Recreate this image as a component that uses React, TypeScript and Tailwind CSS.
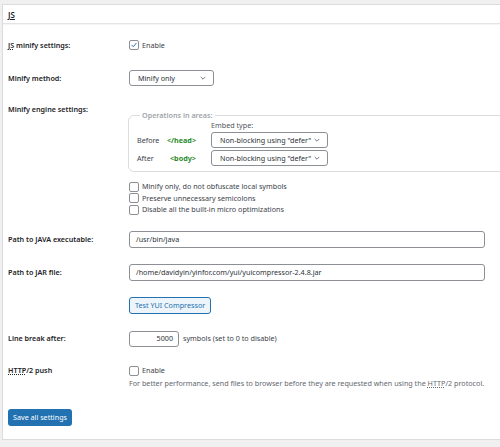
import React from "react";

const Chevron = () => (
  <svg width="8" height="8" viewBox="0 0 20 20" className="shrink-0">
    <path d="M5 8l5 5 5-5" fill="none" stroke="#50575e" strokeWidth="2" strokeLinecap="round" strokeLinejoin="round" />
  </svg>
);

function Select({ value, className }: { value: string; className: string }) {
  return (
    <div
      className={
        "flex items-center justify-between whitespace-nowrap rounded-[3px] border border-[#8c8f94] bg-white pl-[8px] pr-[6px] text-[#2c3338] " +
        className
      }
    >
      <span>{value}</span>
      <Chevron />
    </div>
  );
}

function Checkbox({ checked }: { checked?: boolean }) {
  return (
    <span className="flex h-[10px] w-[10px] shrink-0 items-center justify-center rounded-[2px] border border-[#8c8f94] bg-white">
      {checked && (
        <svg width="10" height="10" viewBox="0 0 20 20">
          <path d="M4.5 10.5l3.8 3.8L15.5 5.5" fill="none" stroke="#2271b1" strokeWidth="2.4" strokeLinecap="round" strokeLinejoin="round" />
        </svg>
      )}
    </span>
  );
}

function Row({ label, className, children }: { label: React.ReactNode; className: string; children: React.ReactNode }) {
  return (
    <div className={"flex " + className}>
      <div className="w-[121px] shrink-0 text-[7.2px] font-semibold text-[#1d2327]">{label}</div>
      <div className="flex-1">{children}</div>
    </div>
  );
}

export default function App() {
  return (
    <div
      className="h-[447px] w-[500px] overflow-hidden bg-[#f0f0f1] pl-[2px] pt-[4px] text-[7.2px] leading-[11px] text-[#3c434a]"
      style={{ fontFamily: '"Segoe UI", "Noto Sans", sans-serif' }}
    >
      <div className="h-[436px] w-[520px] border border-[#dcdcde] bg-white">
        {/* header */}
        <div className="flex h-[19px] items-center border-b border-[#e4e4e6] pl-[5px] shadow-[0_1px_1px_rgba(0,0,0,0.04)]">
          <span className="text-[8px] font-semibold text-[#1d2327] underline decoration-[#1d2327]">JS</span>
        </div>

        <div className="pl-[5px]">
          {/* JS minify settings */}
          <Row label={<><span className="underline decoration-dotted">JS</span> minify settings:</>} className="mt-[15px] h-[12px] items-center">
            <label className="flex items-center gap-[3px]">
              <Checkbox checked />
              <span>Enable</span>
            </label>
          </Row>

          {/* minify method */}
          <Row label="Minify method:" className="mt-[19px] h-[16px] items-center">
            <Select value="Minify only" className="h-[16px] w-[85px]" />
          </Row>

          {/* engine settings */}
          <Row label="Minify engine settings:" className="mt-[18px]">
            <fieldset className="ml-[-1px] mt-[6px] w-[400px] rounded-[6px] border border-[#dcdcde] pb-[5px] pl-[8px]">
              <legend className="ml-[3px] px-[2px] font-semibold text-[#a0a5aa]">Operations in areas:</legend>
              <div className="ml-[74px] mt-[-1px] h-[12px] text-[#50575e]">Embed type:</div>
              <div className="flex h-[16px] items-center">
                <span className="w-[30px]">Before</span>
                <span className="w-[44px] font-bold text-[#2a8a2a]">&lt;/head&gt;</span>
                <Select value={'Non-blocking using "defer"'} className="h-[16px] w-[117px]" />
              </div>
              <div className="mt-[2px] flex h-[16px] items-center">
                <span className="w-[33px]">After</span>
                <span className="w-[41px] font-bold text-[#2a8a2a]">&lt;body&gt;</span>
                <Select value={'Non-blocking using "defer"'} className="h-[16px] w-[117px]" />
              </div>
            </fieldset>
            <div className="mt-[9px] flex flex-col">
              {[
                "Minify only, do not obfuscate local symbols",
                "Preserve unnecessary semicolons",
                "Disable all the built-in micro optimizations",
              ].map((t) => (
                <label key={t} className="flex h-[11.5px] items-center gap-[3px]">
                  <Checkbox />
                  <span>{t}</span>
                </label>
              ))}
            </div>
          </Row>

          {/* java */}
          <Row label="Path to JAVA executable:" className="mt-[15px] h-[17px] items-center">
            <div className="flex h-[17px] w-[356px] items-center rounded-[3px] border border-[#8c8f94] px-[6px] text-[#2c3338]">/usr/bin/java</div>
          </Row>

          <Row label="Path to JAR file:" className="mt-[16px] h-[17px] items-center">
            <div className="flex h-[17px] w-[356px] items-center rounded-[3px] border border-[#8c8f94] px-[6px] text-[#2c3338]">
              /home/davidyin/yinfor.com/yui/yuicompressor-2.4.8.jar
            </div>
          </Row>

          <Row label="" className="mt-[16px] h-[17px] items-center">
            <button className="flex h-[17px] items-center rounded-[3px] border border-[#2271b1] bg-[#eef5fa] px-[5px] text-[#2271b1]">
              Test YUI Compressor
            </button>
          </Row>

          <Row label="Line break after:" className="mt-[17px] h-[16px] items-center">
            <div className="flex items-center">
              <div className="flex h-[16px] w-[50px] items-center justify-end rounded-[3px] border border-[#8c8f94] px-[5px] text-[#2c3338]">5000</div>
              <span className="ml-[4px]">symbols (set to 0 to disable)</span>
            </div>
          </Row>

          <Row
            label={<><span className="underline decoration-dotted">HTTP</span>/2 push</>}
            className="mt-[18px]"
          >
            <label className="flex h-[12px] items-center gap-[3px]">
              <Checkbox />
              <span>Enable</span>
            </label>
            <div className="mt-[1px] text-[#646970]">
              For better performance, send files to browser before they are requested when using the{" "}
              <span className="underline decoration-dotted">HTTP</span>/2 protocol.
            </div>
          </Row>

          <button className="mt-[20px] flex h-[17px] items-center rounded-[3px] bg-[#2271b1] px-[5px] text-white">
            Save all settings
          </button>
        </div>
      </div>
    </div>
  );
}
